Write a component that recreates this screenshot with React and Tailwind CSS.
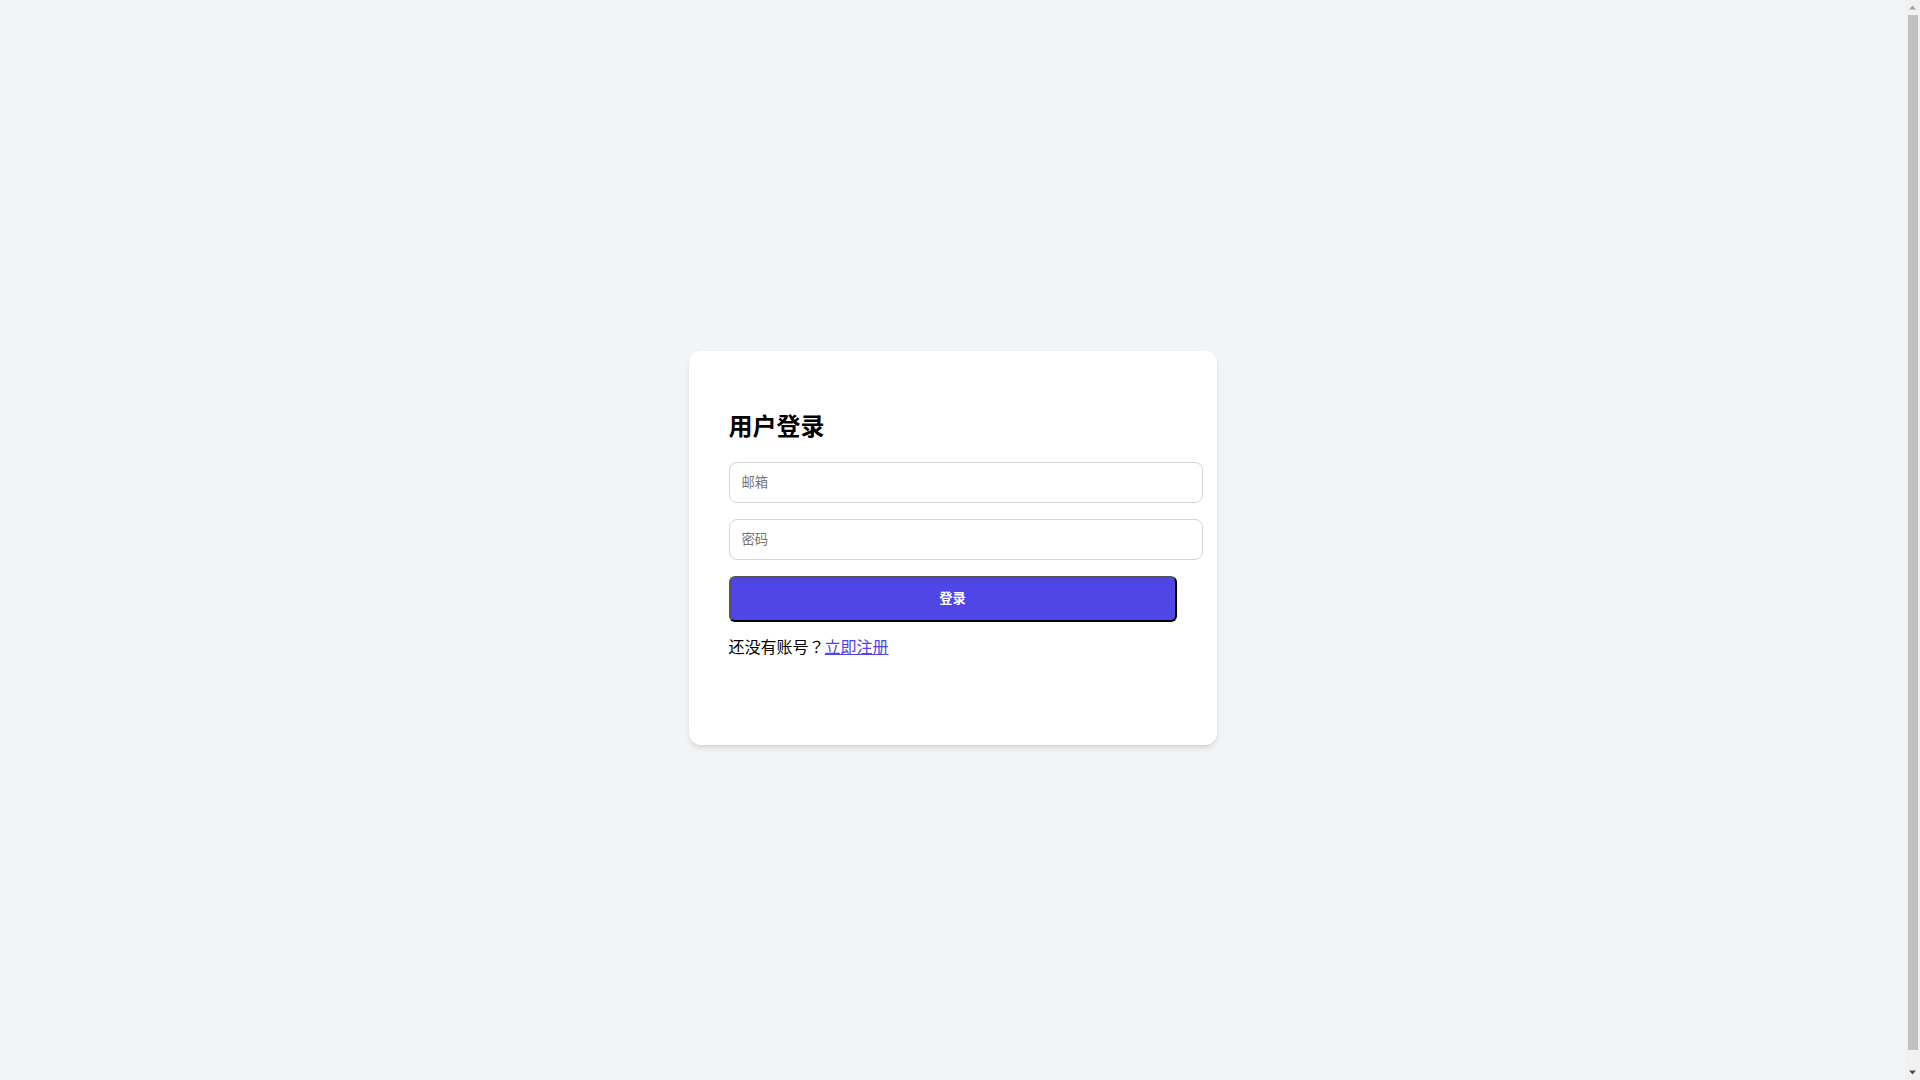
import React from 'react';

function Scrollbar() {
  return (
    <div className="w-[15px] h-screen shrink-0 bg-[#f1f1f1] flex flex-col items-center">
      <svg width="15" height="15" viewBox="0 0 15 15" className="shrink-0">
        <path d="M4 9.5 L7.5 5.5 L11 9.5 Z" fill="#a3a3a3" />
      </svg>
      <div className="w-[10px] h-[1035px] bg-[#c1c1c1]" />
      <div className="flex-1" />
      <svg width="15" height="15" viewBox="0 0 15 15" className="shrink-0">
        <path d="M4 5.5 L11 5.5 L7.5 9.5 Z" fill="#505050" />
      </svg>
    </div>
  );
}

export default function App() {
  return (
    <div className="h-screen flex overflow-hidden bg-gray-100 font-['Liberation_Sans','Noto_Sans_CJK_JP',sans-serif] text-black">
      <main className="flex-1 flex items-center justify-center pt-[16px]">
        <div className="w-[528px] h-[394px] bg-white rounded-xl shadow-md px-10 pt-[60px]">
          <h2 className="text-2xl leading-8 font-bold mb-[19px]">用户登录</h2>
          <form onSubmit={(e) => e.preventDefault()}>
            <input
              type="email"
              placeholder="邮箱"
              className="box-content block w-full p-3 text-[13.333px] leading-[15px] border border-gray-300 rounded-lg outline-none placeholder:text-[#757575]"
            />
            <input
              type="password"
              placeholder="密码"
              className="box-content block w-full p-3 mt-4 text-[13.333px] leading-[15px] border border-gray-300 rounded-lg outline-none placeholder:text-[#757575]"
            />
            <button
              type="submit"
              className="block w-full h-[46px] mt-[16px] bg-[#4f46e5] text-white text-[13.333px] font-bold rounded-md border-2 border-t-[#555] border-l-[#555] border-b-black border-r-black"
            >
              登录
            </button>
          </form>
          <p className="mt-[14px] text-base leading-6">
            还没有账号？<a href="#" className="text-[#4f46e5] underline">立即注册</a>
          </p>
        </div>
      </main>
      <Scrollbar />
    </div>
  );
}
